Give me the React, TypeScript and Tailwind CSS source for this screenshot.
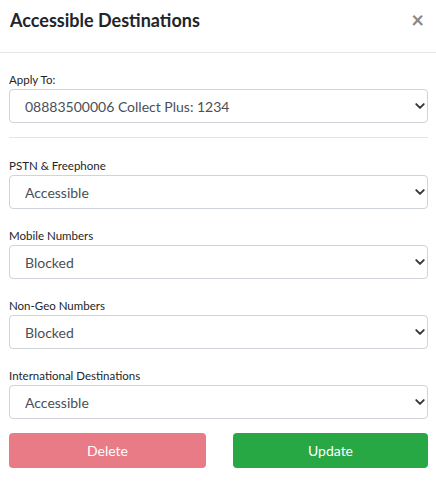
import React from 'react';

// Accessible Destinations modal

const fields = [
  { label: 'PSTN & Freephone', value: 'Accessible' },
  { label: 'Mobile Numbers', value: 'Blocked' },
  { label: 'Non-Geo Numbers', value: 'Blocked' },
  { label: 'International Destinations', value: 'Accessible' },
];

function Select({ value, options }: { value: string; options: string[] }) {
  return (
    <div className="relative">
      <select
        defaultValue={value}
        className="w-full h-[34px] appearance-none rounded-[4px] border border-[#ced4da] bg-white pl-[15px] pr-8 text-[14px] text-[#495057] outline-none"
      >
        {options.map((o) => (
          <option key={o}>{o}</option>
        ))}
      </select>
      <svg
        className="pointer-events-none absolute right-[2px] top-[11px] h-[12px] w-[12px]"
        viewBox="0 0 16 16"
      >
        <path d="M3 5.5l5 5 5-5" fill="none" stroke="#343a40" strokeWidth="2.6" strokeLinecap="round" strokeLinejoin="round" />
      </svg>
    </div>
  );
}

function Label({ children }: { children: React.ReactNode }) {
  return <label className="block mb-[2px] text-[11.5px] leading-[14px]">{children}</label>;
}

export default function App() {
  return (
    <div className="w-[436px] h-[481px] bg-white font-['Lato',sans-serif] text-[#212529]">
      <div className="flex h-[53px] items-start justify-between border-b border-[#e5e5e5] px-[10px] pt-[6px]">
        <h1 className="text-[18px] font-bold leading-[28px]">Accessible Destinations</h1>
        <button className="mr-[2px] mt-[3px] text-[22px] font-bold leading-none text-[#888]">×</button>
      </div>

      <div className="pl-[9px] pr-[8px] pt-[20px]">
        <Label>Apply To:</Label>
        <Select value="08883500006 Collect Plus: 1234" options={['08883500006 Collect Plus: 1234']} />
        <hr className="mt-[14px] mb-[21px] border-[#e5e5e5]" />

        <div className="flex flex-col gap-[20px]">
          {fields.map((f) => (
            <div key={f.label}>
              <Label>{f.label}</Label>
              <Select value={f.value} options={['Accessible', 'Blocked']} />
            </div>
          ))}
        </div>

        <div className="mt-[14px] flex justify-between">
          <button className="h-[35px] w-[197px] rounded-[4px] bg-[#e97b87] text-[14px] text-white">Delete</button>
          <button className="h-[35px] w-[195px] rounded-[4px] bg-[#28a745] text-[14px] text-white">Update</button>
        </div>
      </div>
    </div>
  );
}
